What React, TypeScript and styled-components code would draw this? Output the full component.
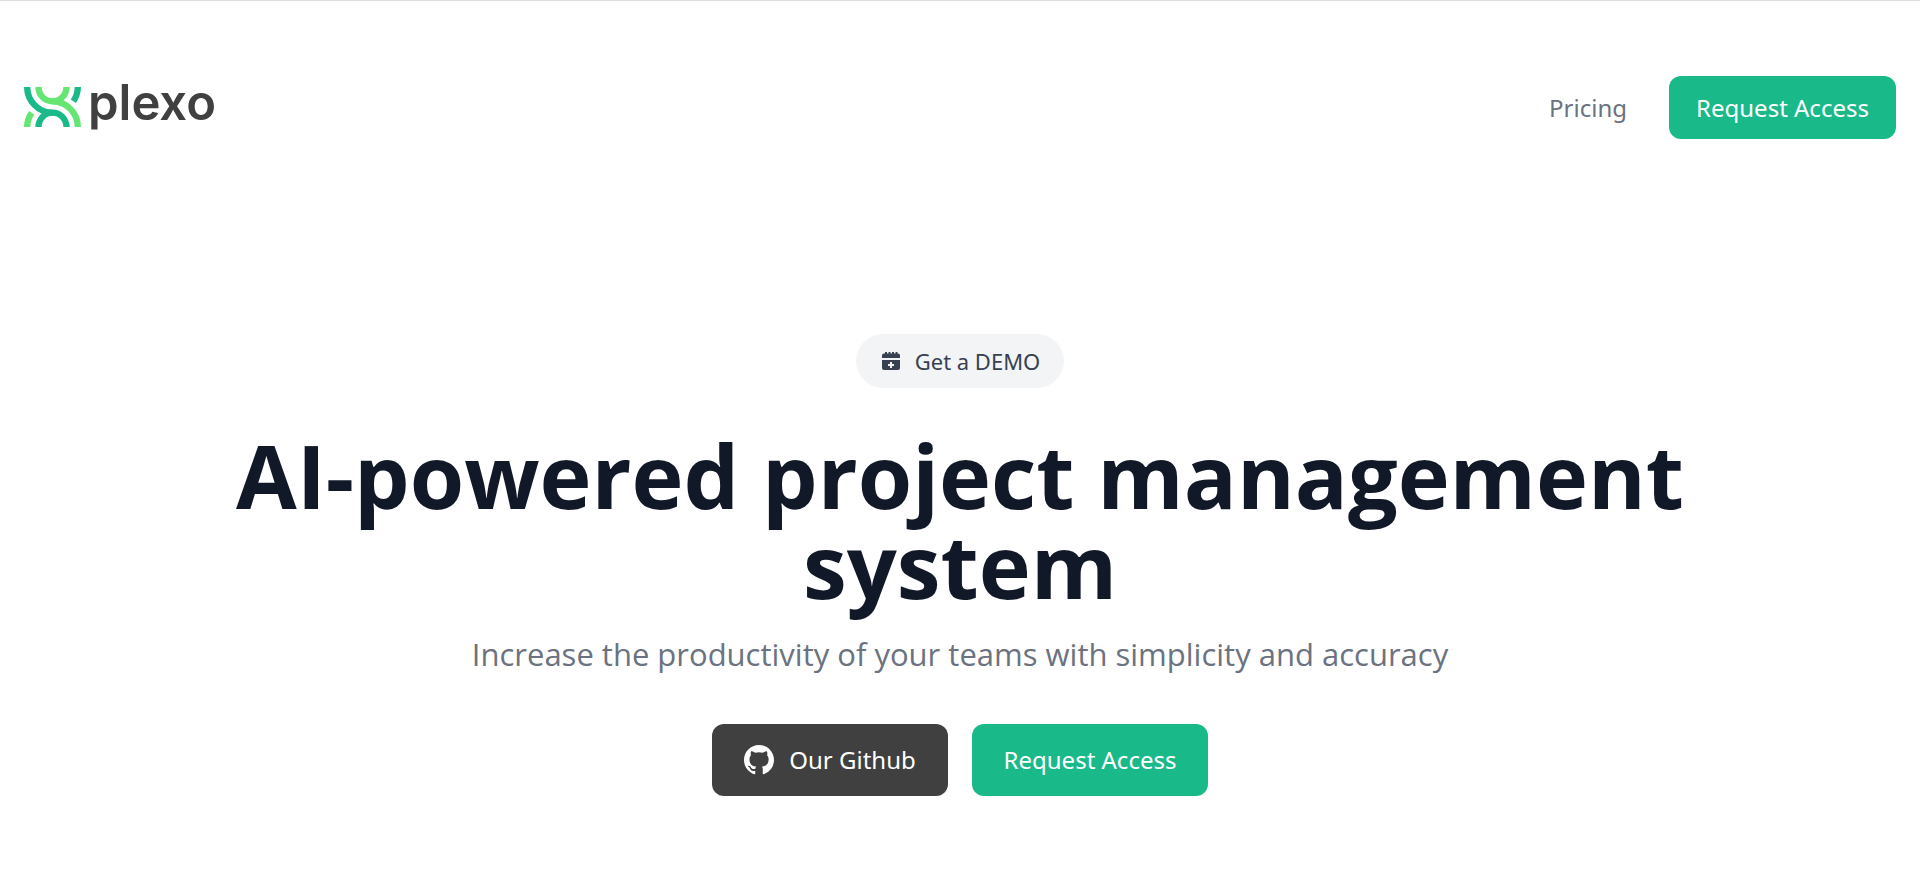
import React from "react";
import styled, { createGlobalStyle } from "styled-components";

const GlobalStyle = createGlobalStyle`
  *, *::before, *::after { box-sizing: border-box; }
  body {
    margin: 0;
    background: #ffffff;
    color: #111827;
    font-family: "Noto Sans", "Open Sans", sans-serif;
  }
`;

const Page = styled.div`
  border-top: 1px solid #dedede;
`;

const Header = styled.header`
  display: flex;
  align-items: center;
  justify-content: space-between;
  padding: 75px 24px 0;
`;

const Brand = styled.a`
  display: flex;
  align-items: center;
  gap: 7px;
  padding-bottom: 1px;
  color: #404040;
  text-decoration: none;
`;

const BrandName = styled.span`
  padding-bottom: 8px;
  font-family: Inter, sans-serif;
  font-size: 49px;
  font-weight: 600;
  line-height: 48px;
`;

const Nav = styled.nav`
  display: flex;
  align-items: center;
  gap: 42px;
`;

const NavLink = styled.a`
  color: #6b7280;
  font-size: 24px;
  line-height: 36px;
  text-decoration: none;
`;

const Button = styled.button<{ $tone?: "green" | "dark"; $large?: boolean }>`
  display: inline-flex;
  align-items: center;
  justify-content: center;
  gap: 15px;
  min-width: ${(p) => (p.$large ? 236 : 227)}px;
  height: ${(p) => (p.$large ? 72 : 63)}px;
  padding: 0 24px;
  border: 0;
  border-radius: 12px;
  background: ${(p) => (p.$tone === "dark" ? "#404040" : "#1ab98a")};
  color: #ffffff;
  font-family: inherit;
  font-size: 24px;
  line-height: 36px;
  white-space: nowrap;
  cursor: pointer;
`;

const Hero = styled.main`
  display: flex;
  flex-direction: column;
  align-items: center;
  padding: 195px 24px 94px;
  text-align: center;
`;

const DemoButton = styled.button`
  display: inline-flex;
  align-items: center;
  gap: 15px;
  height: 54px;
  padding: 0 24px 0 26px;
  border: 0;
  border-radius: 27px;
  background: #f3f4f6;
  color: #374151;
  font-family: inherit;
  font-size: 22px;
  line-height: 30px;
  cursor: pointer;
`;

const Title = styled.h1`
  max-width: 1536px;
  margin: 42px 0 0;
  font-family: "Open Sans", "Noto Sans", sans-serif;
  font-size: 88px;
  font-weight: 700;
  line-height: 90px;
`;

const Subtitle = styled.p`
  margin: 20px 0 0;
  color: #6b7280;
  font-family: "Open Sans", "Noto Sans", sans-serif;
  font-size: 31px;
  line-height: 48px;
`;

const Actions = styled.div`
  display: flex;
  gap: 24px;
  margin-top: 46px;
`;

const Mark = () => (
  <svg width="57" height="40" viewBox="0 0 171 120" fill="none" strokeWidth="19" aria-hidden="true">
    <g stroke="#65e572">
      <path d="M161.5 120A76 77 0 0 0 85.5 43A42 43 0 0 1 43.5 0" />
      <path d="M127.5 0A42 43 0 0 1 85.5 43" />
      <path d="M9.5 120A76 77 0 0 1 23 77" />
    </g>
    <g stroke="#1ab98a">
      <path d="M9.5 0A76 77 0 0 0 85.5 77A42 43 0 0 1 127.5 120" />
      <path d="M43.5 120A42 43 0 0 1 85.5 77" />
      <path d="M161.5 0A76 77 0 0 1 148 43" />
    </g>
  </svg>
);

const CalendarPlus = () => (
  <svg width="18" height="18" viewBox="0 0 18 18" fill="currentColor" aria-hidden="true">
    <path d="M0 6V3.5A2 2 0 0 1 2 1.5H3V0H5V1.5H6.5V0H8.5V1.5H10V0H12V1.5H13.5V0H15.5V1.5H16A2 2 0 0 1 18 3.5V6Z" />
    <path
      fillRule="evenodd"
      d="M0 8H18V16A2 2 0 0 1 16 18H2A2 2 0 0 1 0 16ZM8 10V12H6V14H8V16H10V14H12V12H10V10Z"
    />
  </svg>
);

const Github = () => (
  <svg width="30" height="30" viewBox="0 0 16 16" fill="currentColor" aria-hidden="true">
    <path d="M8 0C3.58 0 0 3.58 0 8c0 3.54 2.29 6.53 5.47 7.59.4.07.55-.17.55-.38 0-.19-.01-.82-.01-1.49-2.01.37-2.53-.49-2.69-.94-.09-.23-.48-.94-.82-1.13-.28-.15-.68-.52-.01-.53.63-.01 1.08.58 1.23.82.72 1.21 1.87.87 2.33.66.07-.52.28-.87.51-1.07-1.78-.2-3.64-.89-3.64-3.95 0-.87.31-1.59.82-2.15-.08-.2-.36-1.02.08-2.12 0 0 .67-.21 2.2.82.64-.18 1.32-.27 2-.27s1.36.09 2 .27c1.53-1.04 2.2-.82 2.2-.82.44 1.1.16 1.92.08 2.12.51.56.82 1.27.82 2.15 0 3.07-1.87 3.75-3.65 3.95.29.25.54.73.54 1.48 0 1.07-.01 1.93-.01 2.2 0 .21.15.46.55.38A8.01 8.01 0 0 0 16 8c0-4.42-3.58-8-8-8z" />
  </svg>
);

export default function App() {
  return (
    <>
      <GlobalStyle />
      <Page>
        <Header>
          <Brand href="#">
            <Mark />
            <BrandName>plexo</BrandName>
          </Brand>
          <Nav>
            <NavLink href="#pricing">Pricing</NavLink>
            <Button>Request Access</Button>
          </Nav>
        </Header>
        <Hero>
          <DemoButton>
            <CalendarPlus />
            Get a DEMO
          </DemoButton>
          <Title>AI-powered project management system</Title>
          <Subtitle>Increase the productivity of your teams with simplicity and accuracy</Subtitle>
          <Actions>
            <Button $tone="dark" $large>
              <Github />
              Our Github
            </Button>
            <Button $large>Request Access</Button>
          </Actions>
        </Hero>
      </Page>
    </>
  );
}
